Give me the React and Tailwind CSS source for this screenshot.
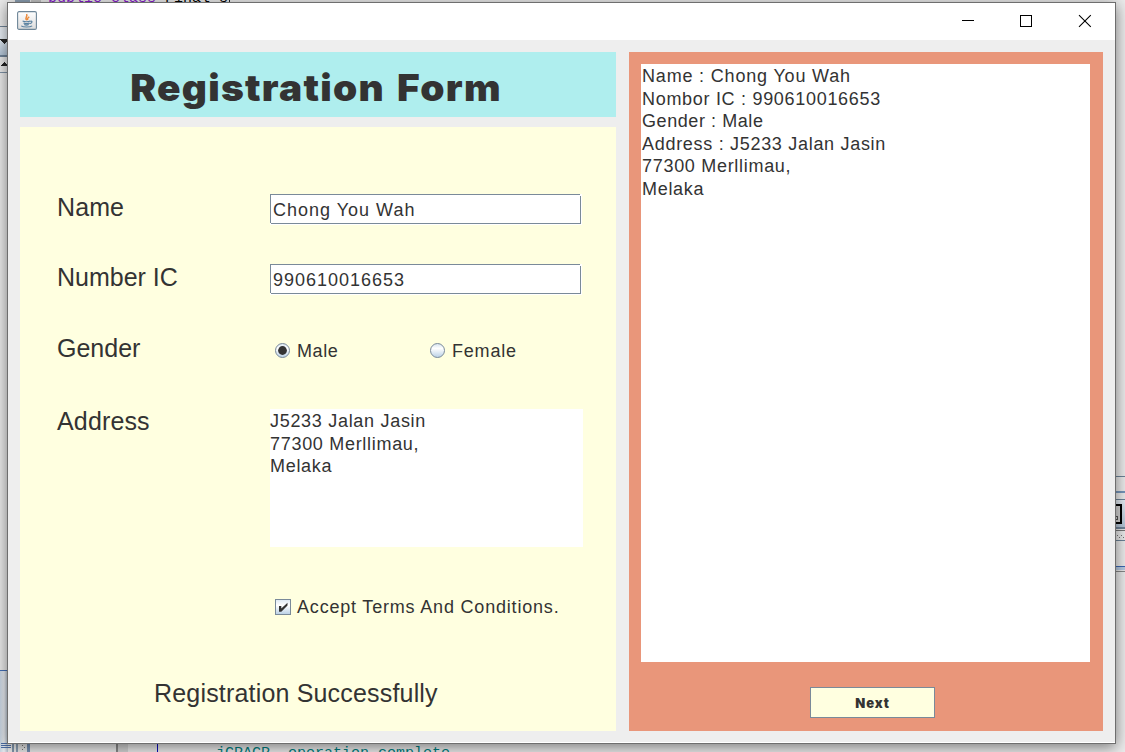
import React from "react";

const font = "font-['Liberation_Sans',Arial,sans-serif]";

function Backdrop() {
  return (
    <div className="absolute inset-0 overflow-hidden bg-[#ececec]">
      <svg className="absolute inset-0" width="1125" height="752" shapeRendering="crispEdges">
        <defs>
          <linearGradient id="bar" x1="0" y1="0" x2="0" y2="1">
            <stop offset="0" stopColor="#e6edf4" />
            <stop offset="1" stopColor="#b4c6d8" />
          </linearGradient>
          <linearGradient id="side" x1="0" y1="0" x2="1" y2="0">
            <stop offset="0" stopColor="#c9d6e4" />
            <stop offset=".5" stopColor="#eef1f5" />
            <stop offset="1" stopColor="#b6c3d1" />
          </linearGradient>
        </defs>
        <rect x="15" y="0" width="15" height="2" fill="#8da0b3" />
        <rect x="31" y="0" width="10" height="2" fill="#c4c4c4" />
        <rect x="0" y="26" width="8" height="1" fill="#708498" />
        <rect x="0" y="28" width="8" height="10" fill="#e7edf4" />
        <rect x="0" y="38" width="8" height="17" fill="url(#bar)" />
        <rect x="0" y="55" width="8" height="2" fill="#71859a" />
        <path d="M0 39h8v1l-4 4-4-4z" fill="#262626" />
        <path d="M4 62l4 4H0z" fill="#262626" />
        <rect x="0" y="72" width="8" height="1" fill="#7f92a6" />
        <rect x="0" y="670" width="8" height="1" fill="#4470b8" />
        <rect x="0" y="671" width="8" height="81" fill="url(#side)" />
        <rect x="1" y="743" width="10" height="1" fill="#4d6fa9" />
        <rect x="1" y="745" width="10" height="1" fill="#4d6fa9" />
        <rect x="1" y="747" width="10" height="1" fill="#4d6fa9" />
        <rect x="12" y="743" width="2" height="9" fill="#8297ad" />
        <rect x="16" y="743" width="2" height="9" fill="#8ea2b7" />
        <rect x="22" y="745" width="1" height="1" fill="#777" />
        <rect x="24" y="747" width="1" height="1" fill="#777" />
        <rect x="22" y="749" width="1" height="1" fill="#777" />
        <rect x="27" y="743" width="3" height="9" fill="#7892b5" />
        <rect x="116" y="743" width="2" height="9" fill="#8a8a8a" />
        <rect x="118" y="743" width="10" height="9" fill="#d5d5d5" />
        <rect x="157" y="743" width="1" height="9" fill="#0c0cc0" />
        <rect x="229" y="0" width="1" height="3" fill="#222" />
        <rect x="1115" y="476" width="10" height="1" fill="#6d8499" />
        <rect x="1115" y="491" width="10" height="2" fill="#7796bb" />
        <rect x="1115" y="499" width="10" height="1" fill="#6d8499" />
        <rect x="1115" y="500" width="10" height="27" fill="url(#bar)" />
        <rect x="1110" y="505" width="11" height="18" fill="#d5d5d5" stroke="#000" strokeWidth="2" />
        <circle cx="1116" cy="518" r="2" fill="none" stroke="#555" />
        <rect x="1115" y="527" width="10" height="2" fill="#71859a" />
        <rect x="1115" y="530" width="10" height="1" fill="#777" />
        <path d="M1117 535h1M1121 535h1M1119 537h1M1123 537h1" stroke="#777" />
        <rect x="1115" y="540" width="10" height="1" fill="#6d8499" />
        <rect x="1115" y="566" width="10" height="1" fill="#3c68b4" />
        <rect x="1115" y="567" width="10" height="3" fill="#b8cce4" />
        <rect x="1115" y="571" width="10" height="1" fill="#888" />
      </svg>
      <div className="absolute left-[48px] top-[-9px] whitespace-pre font-['Liberation_Mono',monospace] text-[15px] leading-[16px] text-black">
        <span className="text-[#8a1bd0]">public class</span> Final s
      </div>
      <div className="absolute left-[216px] top-[746px] whitespace-pre font-['Liberation_Mono',monospace] text-[15px] leading-[16px] text-[#008080]">
        jCPACP  operation complete
      </div>
    </div>
  );
}

function JavaIcon() {
  return (
    <svg width="20" height="19" viewBox="0 0 20 19">
      <defs>
        <linearGradient id="ji" x1="0" y1="0" x2="0" y2="1">
          <stop offset="0" stopColor="#fff" />
          <stop offset="1" stopColor="#dcdcdc" />
        </linearGradient>
      </defs>
      <rect x=".6" y=".6" width="18.8" height="17.8" rx="1.5" fill="url(#ji)" stroke="#6e8698" strokeWidth="1.1" />
      <path d="M9.7 9.2C7 6.8 11.2 5.9 9.6 3M11 9c-1.3-1.4 0-2.2 1.3-3.2" fill="none" stroke="#ea8a3c" strokeWidth="1.5" />
      <path d="M5.6 10c2 .8 6 .7 7.6 0M6.5 11.9c1.6.7 4.6.7 6 0M7.2 13.6c1.2.5 3.4.5 4.6 0M13.3 10.2c2.6-.6 2 2-.6 2.4M4.2 14.9c2 1.6 9 1.5 11 0" fill="none" stroke="#58809f" strokeWidth="1.1" />
    </svg>
  );
}

function TitleBar() {
  return (
    <div className="flex h-[37px] items-start bg-white pl-[9px]">
      <div className="mt-2"><JavaIcon /></div>
      <svg className="ml-auto" width="174" height="37" shapeRendering="crispEdges" fill="none" stroke="#000">
        <path d="M21 17.5h12" />
        <rect x="79.5" y="12.5" width="11" height="11" />
        <path d="M138 12.2l11.8 11.6M149.8 12.2L138 23.8" shapeRendering="auto" strokeWidth="1.1" />
      </svg>
    </div>
  );
}

function TextField({ children }) {
  return (
    <div className="relative h-[31px] w-[312px] bg-white">
      <div className="flex h-[30px] w-[311px] items-center border border-[#7a8a99] pl-[2px] pt-[2px] text-[18px] leading-[22px] tracking-[1px]">
        {children}
      </div>
      <span className="absolute right-px top-0 h-[2px] w-px bg-white" />
      <span className="absolute bottom-px left-0 h-px w-px bg-white" />
    </div>
  );
}

function Radio({ checked, label, tracking }) {
  return (
    <div className={"flex h-[22px] items-center text-[18px] leading-[22px] " + tracking}>
      <svg width="16" height="16" viewBox="0 0 16 16" className="mr-[6px]">
        <defs>
          <linearGradient id={"r" + label} x1="0" y1="0" x2="0" y2="1">
            <stop offset="0" stopColor="#d5e2ee" />
            <stop offset=".35" stopColor="#fff" />
            <stop offset="1" stopColor="#b8cfe5" />
          </linearGradient>
        </defs>
        <circle cx="7.5" cy="7.5" r="7" fill={`url(#r${label})`} stroke="#7a8a99" />
        {checked && <circle cx="7.5" cy="7.5" r="4.4" fill="#333" />}
      </svg>
      {label}
    </div>
  );
}

function Row({ label, labelClass, className, children }) {
  return (
    <div className={"flex items-start pl-[37px] " + className}>
      <div className={"w-[213px] shrink-0 text-[25px] " + labelClass}>{label}</div>
      {children}
    </div>
  );
}

export default function App() {
  return (
    <div className={"relative h-[752px] w-[1125px] overflow-hidden text-[#333] " + font}>
      <Backdrop />
      <div className="absolute left-[7px] top-[2px] flex h-[742px] w-[1109px] flex-col border border-[#6e6e6e] bg-[#eee] shadow-[0_3px_14px_rgba(0,0,0,0.5)]">
        <TitleBar />
        <div className="flex flex-1 gap-[13px] border-b border-white px-3 pb-[11px] pt-3">
          <div className="flex w-[596px] flex-col gap-[10px]">
            <div className="flex h-[65px] items-center justify-center bg-[#afeeee] pr-1">
              <h1 className="scale-x-105 whitespace-nowrap pt-[6px] font-['Inter',sans-serif] text-[37px] font-black leading-[44px] tracking-[1.2px] [word-spacing:3px]">Registration Form</h1>
            </div>
            <div className="h-[604px] bg-[#ffffe0] pt-[67px]">
              <Row label="Name" className="h-[70px]" labelClass="leading-[27px] tracking-[0.1px]">
                <TextField>Chong You Wah</TextField>
              </Row>
              <Row label="Number IC" className="h-[70px]" labelClass="leading-[27px]">
                <TextField>990610016653</TextField>
              </Row>
              <Row label="Gender" className="h-[75px]" labelClass="leading-[28px]">
                <div className="flex pl-[5px] pt-[6px]">
                  <div className="w-[155px]"><Radio checked label="Male" tracking="tracking-[0.6px]" /></div>
                  <Radio label="Female" tracking="tracking-[0.8px]" />
                </div>
              </Row>
              <Row label="Address" className="h-[187px]" labelClass="leading-[25px] tracking-[0.15px]">
                <div className="h-[138px] w-[313px] whitespace-pre bg-white pt-px text-[18px] leading-[22.5px] tracking-[0.7px]">
                  {"J5233 Jalan Jasin\n77300 Merllimau,\nMelaka"}
                </div>
              </Row>
              <div className="flex h-[22px] items-center pl-[255px] text-[18px] leading-[22px] tracking-[0.81px]">
                <svg width="16" height="17" viewBox="0 0 16 17" className="mr-[6px]">
                  <defs>
                    <linearGradient id="cb" x1="0" y1="0" x2="0" y2="1">
                      <stop offset="0" stopColor="#dde8f3" />
                      <stop offset=".4" stopColor="#fff" />
                      <stop offset="1" stopColor="#b8cfe5" />
                    </linearGradient>
                  </defs>
                  <rect x=".5" y=".5" width="15" height="15" fill="url(#cb)" stroke="#7a8a99" />
                  <path d="M4 7h2.3v2.6L12.5 3.8V6.5L6.3 12.8H4z" fill="#333" />
                </svg>
                Accept Terms And Conditions.
              </div>
              <div className="pl-[134px] pt-[60px] text-[25px] leading-[30px] tracking-[0.18px]">Registration Successfully</div>
            </div>
          </div>
          <div className="flex h-[679px] w-[474px] flex-col items-start bg-[#e9967a] pl-3 pt-3">
            <div className="h-[598px] w-[449px] whitespace-pre bg-white pl-px pt-px text-[18px] leading-[22.5px] tracking-[0.7px]">
              <span className="tracking-[0.82px]">{"Name : Chong You Wah"}</span>
              {"\nNombor IC : 990610016653\n"}
              <span className="tracking-[0.57px]">{"Gender : Male"}</span>
              {"\nAddress : J5233 Jalan Jasin\n77300 Merllimau,\nMelaka"}
            </div>
            <button className="ml-[169px] mt-[25px] h-[31px] w-[125px] border border-[#7a8a99] bg-[#ffffe0] font-['Inter',sans-serif] text-[13px] font-black leading-[16px] tracking-[0.9px]">
              Next
            </button>
          </div>
        </div>
      </div>
    </div>
  );
}
